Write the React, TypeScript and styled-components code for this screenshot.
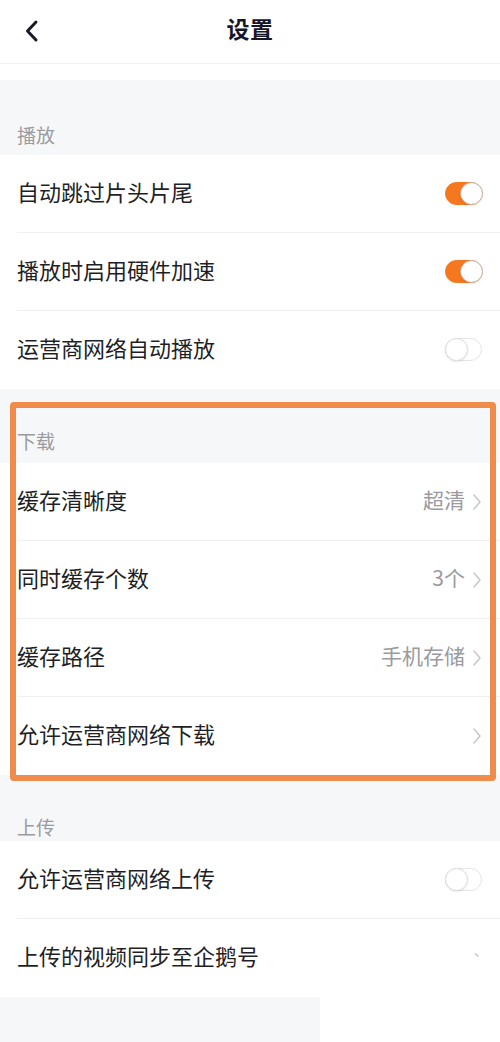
import React from "react";
import styled, { createGlobalStyle } from "styled-components";

const GlobalStyle = createGlobalStyle`
  html, body {
    margin: 0;
    padding: 0;
    background: #ffffff;
  }
  body {
    font-family: "Noto Sans CJK SC", "Noto Sans", sans-serif;
    -webkit-font-smoothing: antialiased;
  }
`;

type Item = {
  label: string;
  toggle?: boolean;
  value?: string;
  arrow?: boolean;
  stub?: boolean;
};

const play: Item[] = [
  { label: "自动跳过片头片尾", toggle: true },
  { label: "播放时启用硬件加速", toggle: true },
  { label: "运营商网络自动播放", toggle: false },
];

const download: Item[] = [
  { label: "缓存清晰度", value: "超清", arrow: true },
  { label: "同时缓存个数", value: "3个", arrow: true },
  { label: "缓存路径", value: "手机存储", arrow: true },
  { label: "允许运营商网络下载", arrow: true },
];

const upload: Item[] = [
  { label: "允许运营商网络上传", toggle: false },
  { label: "上传的视频同步至企鹅号", stub: true },
];

const Chevron = () => (
  <svg width="10" height="20" viewBox="0 0 10 20" fill="none">
    <path d="M2 3 L8 10 L2 17" stroke="#c9c9cc" strokeWidth="1.6" strokeLinecap="round" strokeLinejoin="round" />
  </svg>
);

const BackIcon = () => (
  <svg width="16" height="24" viewBox="0 0 16 24" fill="none">
    <path d="M12 3 L3.5 12 L12 21" stroke="#1a1a26" strokeWidth="3" strokeLinecap="round" strokeLinejoin="round" />
  </svg>
);

const Stub = () => (
  <svg width="10" height="20" viewBox="0 0 10 20" fill="none">
    <path d="M3.5 6 L6 8" stroke="#c2c2c6" strokeWidth="1.6" strokeLinecap="round" />
  </svg>
);

const SettingRow = ({ item, last }: { item: Item; last: boolean }) => (
  <Row>
    <RowInner $last={last}>
      <Label>{item.label}</Label>
      <Trail>
        {item.value && <Value>{item.value}</Value>}
        {item.arrow && <Chevron />}
        {item.stub && <Stub />}
        {item.toggle !== undefined && (
          <Switch $on={item.toggle}>
            <Knob $on={item.toggle} />
          </Switch>
        )}
      </Trail>
    </RowInner>
  </Row>
);

const Group = ({ items }: { items: Item[] }) => (
  <>
    {items.map((it, i) => (
      <SettingRow key={it.label} item={it} last={i === items.length - 1} />
    ))}
  </>
);

export default function App() {
  return (
    <Page>
      <GlobalStyle />
      <Header>
        <BackButton>
          <BackIcon />
        </BackButton>
        <Title>设置</Title>
      </Header>
      <Spacer />

      <SectionTitle $h={75} $pb={10}>播放</SectionTitle>
      <Group items={play} />

      <Highlight>
        <SectionTitle $h={74} $pb={12}>下载</SectionTitle>
        <Group items={download} />
      </Highlight>

      <SectionTitle $h={66} $pb={4}>上传</SectionTitle>
      <Group items={upload} />

      <Footer>
        <FooterGrey />
      </Footer>
    </Page>
  );
}

const Page = styled.div`
  width: 500px;
  height: 1042px;
  overflow: hidden;
  background: #ffffff;
  display: flex;
  flex-direction: column;
`;

const Header = styled.div`
  height: 64px;
  flex-shrink: 0;
  display: flex;
  align-items: center;
  justify-content: center;
  position: relative;
  border-bottom: 1px solid #f2f2f4;
  box-sizing: border-box;
`;

const BackButton = styled.div`
  position: absolute;
  left: 24px;
  top: 19px;
  width: 16px;
  height: 24px;
  display: flex;
`;

const Title = styled.div`
  font-size: 23px;
  font-weight: 700;
  color: #16162a;
  letter-spacing: 0.5px;
  margin-top: -8px;
`;

const Spacer = styled.div`
  height: 16px;
  flex-shrink: 0;
`;

const SectionTitle = styled.div<{ $h: number; $pb: number }>`
  height: ${(p) => p.$h}px;
  flex-shrink: 0;
  box-sizing: border-box;
  background: #f6f7f9;
  display: flex;
  align-items: flex-end;
  padding: 0 0 ${(p) => p.$pb}px 17px;
  font-size: 19px;
  line-height: 20px;
  color: #9b9ba0;
`;

const Highlight = styled.div`
  position: relative;
  display: flex;
  flex-direction: column;

  &::after {
    content: "";
    position: absolute;
    left: 10px;
    right: 4px;
    top: 13px;
    bottom: -6px;
    border: 6px solid #ef8c4b;
    border-radius: 4px;
    pointer-events: none;
  }
`;

const Row = styled.div`
  height: 78px;
  flex-shrink: 0;
  background: #ffffff;
  padding-left: 17px;
  box-sizing: border-box;
`;

const RowInner = styled.div<{ $last: boolean }>`
  height: 100%;
  box-sizing: border-box;
  display: flex;
  align-items: center;
  justify-content: space-between;
  padding-right: 18px;
  border-bottom: 1px solid ${(p) => (p.$last ? "transparent" : "#f0f0f2")};
`;

const Label = styled.div`
  font-size: 22px;
  color: #1f1f26;
  line-height: 30px;
  margin-bottom: 6px;
`;

const Trail = styled.div`
  display: flex;
  align-items: center;
  gap: 7px;
`;

const Value = styled.div`
  font-size: 21px;
  color: #9a9a9f;
  line-height: 30px;
  margin-bottom: 6px;
`;

const Switch = styled.div<{ $on: boolean }>`
  width: 37px;
  height: 23px;
  border-radius: 12px;
  box-sizing: border-box;
  background: ${(p) => (p.$on ? "#f5771f" : "#ffffff")};
  border: 1px solid ${(p) => (p.$on ? "#f5771f" : "#e4e4e6")};
  position: relative;
`;

const Knob = styled.div<{ $on: boolean }>`
  position: absolute;
  top: -1px;
  left: ${(p) => (p.$on ? "14px" : "-1px")};
  width: 23px;
  height: 23px;
  border-radius: 50%;
  box-sizing: border-box;
  background: #ffffff;
  border: 1px solid ${(p) => (p.$on ? "#c9a58c" : "#dcdcde")};
  box-shadow: 0 1px 2px rgba(0, 0, 0, 0.08);
`;

const Footer = styled.div`
  flex: 1;
  display: flex;
  background: #ffffff;
`;

const FooterGrey = styled.div`
  width: 320px;
  background: #f6f7f9;
`;
